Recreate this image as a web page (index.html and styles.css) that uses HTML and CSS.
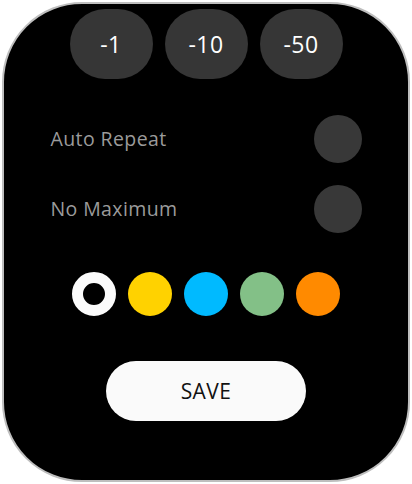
FILE: index.html
```html
<!DOCTYPE html>
<html>
<head>
<meta charset="utf-8">
<link rel="stylesheet" href="styles.css">
</head>
<body>
<div class="watch">
  <div class="steps">
    <div class="step">-1</div>
    <div class="step">-10</div>
    <div class="step">-50</div>
  </div>
  <div class="option first">
    <span class="label">Auto Repeat</span>
    <span class="toggle"></span>
  </div>
  <div class="option second">
    <span class="label">No Maximum</span>
    <span class="toggle"></span>
  </div>
  <div class="colors">
    <span class="swatch selected"></span>
    <span class="swatch yellow"></span>
    <span class="swatch blue"></span>
    <span class="swatch green"></span>
    <span class="swatch orange"></span>
  </div>
  <div class="save-wrap">
    <div class="save">SAVE</div>
  </div>
</div>
</body>
</html>
```
FILE: styles.css
```css
html, body {
  margin: 0;
  padding: 0;
  background: #ffffff;
}
body {
  width: 412px;
  height: 484px;
  overflow: hidden;
  font-family: "Open Sans", "Noto Sans", sans-serif;
}
.watch {
  box-sizing: border-box;
  margin: 2px;
  width: 408px;
  height: 480px;
  border: 2.5px solid #bebebe;
  border-radius: 80px;
  background: #000000;
  display: flex;
  flex-direction: column;
}
.steps {
  display: flex;
  justify-content: center;
  gap: 12px;
  margin-top: 4.5px;
}
.step {
  width: 83px;
  height: 70px;
  border-radius: 35px;
  background: #363636;
  color: #ffffff;
  font-size: 23px;
  letter-spacing: 0.5px;
  display: flex;
  align-items: center;
  justify-content: center;
}
.option {
  display: flex;
  align-items: center;
  justify-content: space-between;
  padding: 0 46.5px;
}
.option.first {
  margin-top: 36px;
}
.option.second {
  margin-top: 22px;
}
.label {
  color: #9b9b9b;
  font-size: 19.5px;
  letter-spacing: 0.4px;
}
.toggle {
  width: 48px;
  height: 48px;
  border-radius: 50%;
  background: #383838;
}
.colors {
  display: flex;
  justify-content: center;
  gap: 12px;
  margin-top: 39px;
}
.swatch {
  width: 44px;
  height: 44px;
  border-radius: 50%;
  box-sizing: border-box;
}
.swatch.selected {
  border: 11px solid #fbfbfb;
  background: #000000;
}
.swatch.yellow { background: #ffd200; }
.swatch.blue { background: #00baff; }
.swatch.green { background: #83c087; }
.swatch.orange { background: #ff8a00; }
.save-wrap {
  display: flex;
  justify-content: center;
  margin-top: 45px;
}
.save {
  width: 200px;
  height: 60px;
  border-radius: 30px;
  background: #fafafa;
  color: #111111;
  font-size: 21px;
  letter-spacing: 0.4px;
  display: flex;
  align-items: center;
  justify-content: center;
}
```
